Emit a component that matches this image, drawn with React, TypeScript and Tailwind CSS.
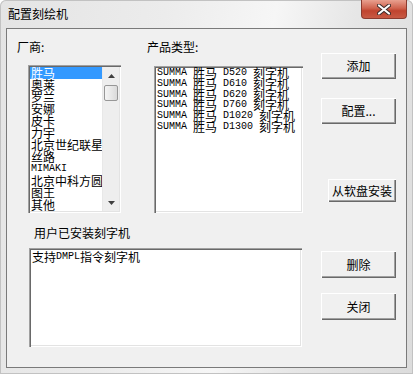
const vendors = [
  "胜马",
  "奥莱",
  "罗兰",
  "安娜",
  "皮卡",
  "力宇",
  "北京世纪联星",
  "丝路",
  "MIMAKI",
  "北京中科方圆",
  "图王",
  "其他",
  "日本(其他)",
];

const products = [
  "SUMMA 胜马 D520 刻字机",
  "SUMMA 胜马 D610 刻字机",
  "SUMMA 胜马 D620 刻字机",
  "SUMMA 胜马 D760 刻字机",
  "SUMMA 胜马 D1020 刻字机",
  "SUMMA 胜马 D1300 刻字机",
];

// SimSun-like look: half-width latin at 6px, CJK at 12px
function Mixed({ text }: { text: string }) {
  const parts = text.split(/([\x00-\x7f]+)/).filter((p) => p.length > 0);
  return (
    <>
      {parts.map((p, i) =>
        /^[\x00-\x7f]+$/.test(p) ? (
          <span key={i} className="font-['Liberation_Mono',monospace] text-[10px]">
            {p}
          </span>
        ) : (
          <span key={i} className="text-[12px]">
            {p}
          </span>
        )
      )}
    </>
  );
}

const sunken =
  "bg-white p-[2px] shadow-[inset_1px_1px_#a0a0a0,inset_2px_2px_#696969,inset_-1px_-1px_#ffffff,inset_-2px_-2px_#e3e3e3]";

function Button({ label, className }: { label: string; className: string }) {
  return (
    <div
      className={`flex items-center justify-center bg-[#f0f0f0] text-[12px] leading-[14px] text-black shadow-[inset_1px_1px_#ffffff,inset_-1px_-1px_#696969,inset_-2px_-2px_#a0a0a0] ${className}`}
    >
      {label}
    </div>
  );
}

function Arrow({ down }: { down?: boolean }) {
  return (
    <div className="flex h-[17px] items-center justify-center">
      <svg width="7" height="4" viewBox="0 0 7 4">
        <polygon points={down ? "0,0 7,0 3.5,4" : "0,4 3.5,0 7,4"} fill="#404040" />
      </svg>
    </div>
  );
}

export default function App() {
  return (
    <div className="flex h-[374px] w-[413px] flex-col rounded-t-[6px] bg-[linear-gradient(100deg,#e4e4e4_0%,#ececec_35%,#f6f6f6_58%,#e6e6e6_75%,#dcdcdc_100%)] font-['Noto_Sans_CJK_SC',sans-serif] text-black shadow-[inset_0_0_0_1px_#c2c2c2]">
      {/* title bar */}
      <div className="flex h-[28px] items-start justify-between">
        <div className="pl-[8px] pt-[6px] text-[12px] leading-[16px]">配置刻绘机</div>
        <div className="mr-[6px] flex h-[19px] w-[46px] items-center justify-center rounded-b-[4px] border border-t-0 border-[#8b3b2f] bg-[linear-gradient(#e8a08f,#d0644f_45%,#c0442f_60%,#c85a44)]">
          <svg width="14" height="11" viewBox="0 0 14 11">
            <path d="M2 1.5 L12 9.5 M12 1.5 L2 9.5" stroke="#3a2a28" strokeWidth="4" strokeLinecap="round" />
            <path d="M2 1.5 L12 9.5 M12 1.5 L2 9.5" stroke="#ffffff" strokeWidth="2.2" strokeLinecap="round" />
          </svg>
        </div>
      </div>

      {/* client area */}
      <div className="mx-[6px] h-[340px] border border-[#7a7a7a] bg-[#f0f0f0]">
        <div className="flex pt-[11px]">
          {/* vendors */}
          <div className="ml-[10px] w-[104px]">
            <div className="h-[14px] text-[12px] leading-[14px]">厂商:</div>
            <div className={`ml-[11px] mt-[11px] flex h-[148px] w-[93px] ${sunken}`}>
              <div className="flex-1 overflow-hidden">
                {vendors.map((v, i) => (
                  <div
                    key={v}
                    className={`flex h-[12px] items-center whitespace-pre pl-[1px] leading-[12px] ${
                      i === 0 ? "bg-[#3399ff] text-white" : ""
                    }`}
                  >
                    <Mixed text={v} />
                  </div>
                ))}
              </div>
              <div className="flex w-[17px] flex-col border-l border-[#e8e8e8] bg-[#eeeeee]">
                <Arrow />
                <div className="mx-[1px] mt-[1px] h-[16px] rounded-[2px] border border-[#979797] bg-[linear-gradient(90deg,#f4f4f4,#e8e8e8_50%,#dadada)]" />
                <div className="flex-1" />
                <Arrow down />
              </div>
            </div>
          </div>

          {/* products */}
          <div className="ml-[26px] w-[156px]">
            <div className="h-[14px] text-[12px] leading-[14px]">产品类型:</div>
            <div className={`ml-[7px] mt-[12px] h-[147px] w-[149px] ${sunken}`}>
              {products.map((p) => (
                <div key={p} className="flex h-[10.67px] items-center whitespace-pre pl-[1px] leading-[10px]">
                  <Mixed text={p} />
                </div>
              ))}
            </div>
          </div>

          {/* right buttons */}
          <div className="ml-[18px] flex flex-col">
            <Button label="添加" className="mt-[13px] h-[26px] w-[75px]" />
            <Button label="配置..." className="mt-[19px] h-[26px] w-[75px]" />
            <Button label="从软盘安装" className="ml-[7px] mt-[55px] h-[23px] w-[68px]" />
          </div>
        </div>

        <div className="mt-[13px] flex">
          <div className="ml-[22px]">
            <div className="ml-[5px] h-[14px] text-[12px] leading-[14px]">用户已安装刻字机</div>
            <div className={`mt-[8px] h-[99px] w-[273px] ${sunken}`}>
              <div className="flex h-[14px] items-center whitespace-pre pl-[1px] leading-[12px]">
                <Mixed text="支持DMPL指令刻字机" />
              </div>
            </div>
          </div>
          <div className="ml-[19px] flex flex-col">
            <Button label="删除" className="mt-[25px] h-[27px] w-[75px]" />
            <Button label="关闭" className="mt-[15px] h-[27px] w-[75px]" />
          </div>
        </div>
      </div>
    </div>
  );
}
